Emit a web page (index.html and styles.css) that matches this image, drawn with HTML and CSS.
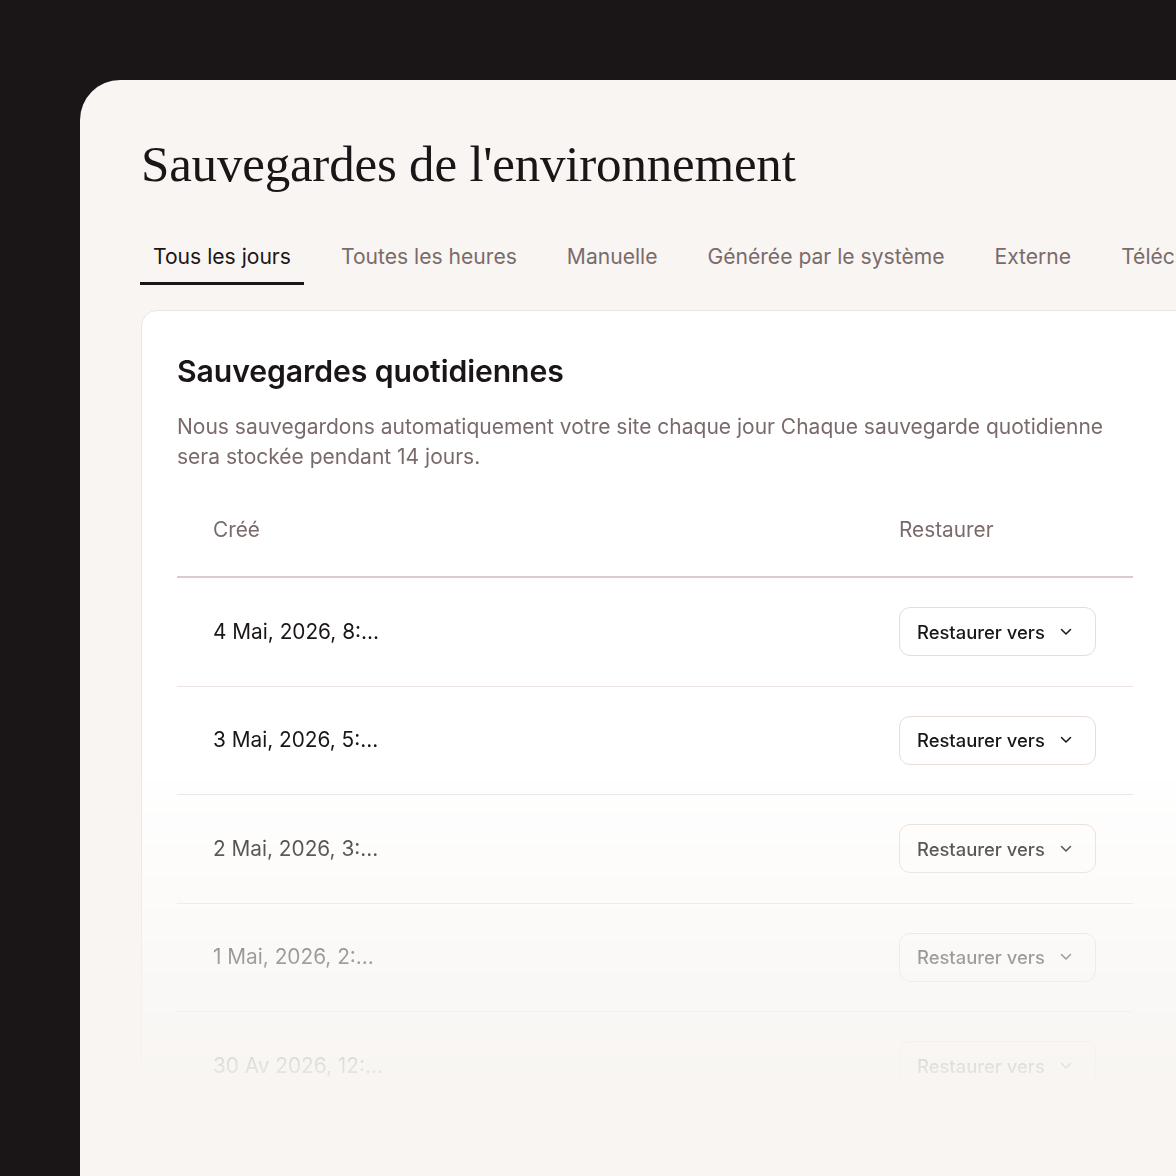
FILE: index.html
```html
<!DOCTYPE html>
<html lang="fr">
<head>
<meta charset="utf-8">
<title>Sauvegardes de l'environnement</title>
<link rel="stylesheet" href="styles.css">
</head>
<body>
<div class="frame">
  <main class="panel">
    <h1 class="title">Sauvegardes de l'environnement</h1>
    <nav class="tabs">
      <a class="tab active">Tous les jours</a>
      <a class="tab">Toutes les heures</a>
      <a class="tab">Manuelle</a>
      <a class="tab">Générée par le système</a>
      <a class="tab">Externe</a>
      <a class="tab">Téléchargements</a>
    </nav>
    <section class="card">
      <h2 class="card-title">Sauvegardes quotidiennes</h2>
      <p class="card-desc">Nous sauvegardons automatiquement votre site chaque jour Chaque sauvegarde quotidienne sera stockée pendant 14 jours.</p>
      <div class="table">
        <div class="row head">
          <div class="cell c1">Créé</div>
          <div class="cell c2">Restaurer</div>
        </div>
        <div class="row">
          <div class="cell c1">4 Mai, 2026, 8:...</div>
          <div class="cell c2"><button class="btn">Restaurer vers <svg class="chev" viewBox="0 0 12 8" width="12" height="8"><path d="M1.5 1.5 L6 6 L10.5 1.5" fill="none" stroke="currentColor" stroke-width="1.5" stroke-linecap="round" stroke-linejoin="round"/></svg></button></div>
        </div>
        <div class="row">
          <div class="cell c1">3 Mai, 2026, 5:...</div>
          <div class="cell c2"><button class="btn">Restaurer vers <svg class="chev" viewBox="0 0 12 8" width="12" height="8"><path d="M1.5 1.5 L6 6 L10.5 1.5" fill="none" stroke="currentColor" stroke-width="1.5" stroke-linecap="round" stroke-linejoin="round"/></svg></button></div>
        </div>
        <div class="row">
          <div class="cell c1">2 Mai, 2026, 3:...</div>
          <div class="cell c2"><button class="btn">Restaurer vers <svg class="chev" viewBox="0 0 12 8" width="12" height="8"><path d="M1.5 1.5 L6 6 L10.5 1.5" fill="none" stroke="currentColor" stroke-width="1.5" stroke-linecap="round" stroke-linejoin="round"/></svg></button></div>
        </div>
        <div class="row">
          <div class="cell c1">1 Mai, 2026, 2:...</div>
          <div class="cell c2"><button class="btn">Restaurer vers <svg class="chev" viewBox="0 0 12 8" width="12" height="8"><path d="M1.5 1.5 L6 6 L10.5 1.5" fill="none" stroke="currentColor" stroke-width="1.5" stroke-linecap="round" stroke-linejoin="round"/></svg></button></div>
        </div>
        <div class="row">
          <div class="cell c1">30 Av 2026, 12:...</div>
          <div class="cell c2"><button class="btn">Restaurer vers <svg class="chev" viewBox="0 0 12 8" width="12" height="8"><path d="M1.5 1.5 L6 6 L10.5 1.5" fill="none" stroke="currentColor" stroke-width="1.5" stroke-linecap="round" stroke-linejoin="round"/></svg></button></div>
        </div>
      </div>
    </section>
  </main>
</div>
</body>
</html>
```
FILE: styles.css
```css
* { box-sizing: border-box; }
html, body { margin: 0; padding: 0; }
body {
  background: #1a1617;
  font-family: Inter, "Noto Sans", "Liberation Sans", sans-serif;
  overflow: hidden;
  height: 1176px;
}
.frame {
  padding: 80px 0 0 80px;
  height: 1176px;
}
.panel {
  background: #f8f5f2;
  border-top-left-radius: 40px;
  height: 1096px;
  overflow: hidden;
  padding: 52px 0 0 61px;
}
.title {
  margin: 0;
  font-family: "Liberation Serif", "Times New Roman", serif;
  font-weight: 400;
  font-size: 51px;
  line-height: 64px;
  letter-spacing: -0.2px;
  color: #1a1617;
  white-space: nowrap;
}
.tabs {
  display: flex;
  gap: 24px;
  margin-top: 47px;
  margin-left: -1px;
  white-space: nowrap;
}
.tab {
  display: block;
  padding: 0 13px;
  font-size: 21.1px;
  line-height: 28px;
  height: 42px;
  color: #7a6b6b;
  border-bottom: 3px solid transparent;
}
.tab.active {
  color: #1a1617;
  border-bottom-color: #1a1617;
}
.card {
  margin-top: 25px;
  width: 1100px;
  background: #ffffff;
  border: 1px solid #ebe4df;
  border-radius: 16px;
  padding: 42px 0 0 35px;
  height: 900px;
  -webkit-mask-image: linear-gradient(to bottom, #000 0px, #000 440px, rgba(0,0,0,0) 790px);
  mask-image: linear-gradient(to bottom, #000 0px, #000 440px, rgba(0,0,0,0) 790px);
}
.card-title {
  margin: 0;
  font-size: 30.2px;
  font-weight: 600;
  line-height: 36px;
  color: #1a1617;
  letter-spacing: -0.1px;
}
.card-desc {
  margin: 23px 0 0;
  width: 956px;
  font-size: 21px;
  line-height: 30px;
  color: #7a6b6b;
}
.table {
  width: 956px;
  margin-top: 12px;
}
.row {
  display: grid;
  grid-template-columns: 1fr 234px;
  align-items: center;
  height: 108.5px;
  border-bottom: 1px solid #ebe3df;
}
.row.head {
  height: 94px;
  border-bottom: 2px solid #d9cccb;
  color: #7a6b6b;
}
.cell {
  font-size: 20.8px;
  line-height: 28px;
}
.c1 { padding-left: 36px; }
.row:not(.head) .c1 { color: #1a1617; }
.btn {
  display: inline-flex;
  align-items: center;
  width: 197px;
  height: 49px;
  padding: 0 0 0 17px;
  background: #fff;
  border: 1px solid #e6dcd8;
  border-radius: 11px;
  font-family: Inter, "Noto Sans", "Liberation Sans", sans-serif;
  font-size: 18.4px;
  font-weight: 500;
  color: #1a1617;
  cursor: pointer;
}
.chev {
  margin-left: 15px;
  color: #1a1617;
}
```
